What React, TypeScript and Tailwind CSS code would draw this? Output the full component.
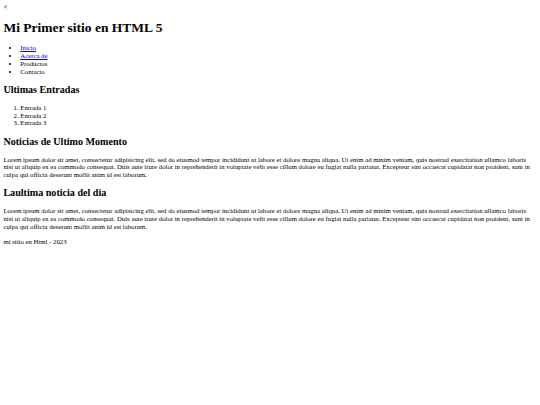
const LOREM =
  "Lorem ipsum dolor sit amet, consectetur adipisicing elit, sed do eiusmod tempor incididunt ut labore et dolore magna aliqua. Ut enim ad minim veniam, quis nostrud exercitation ullamco laboris nisi ut aliquip ex ea commodo consequat. Duis aute irure dolor in reprehenderit in voluptate velit esse cillum dolore eu fugiat nulla pariatur. Excepteur sint occaecat cupidatat non proident, sunt in culpa qui officia deserunt mollit anim id est laborum.";

export default function App() {
  return (
    <div className="min-h-[405px] bg-white px-[3.4px] py-[3px] font-['Liberation_Serif',serif] text-[6.75px] leading-[7.8px] text-black">
      <div>&lt;</div>
      <h1 className="my-[9px] text-[13.5px] font-bold leading-[15.5px]">Mi Primer sitio en HTML 5</h1>
      <ul className="my-[6.75px] list-disc pl-[16.9px]">
        <li>
          <a href="#" className="text-[#0000ee] underline">
            Inicio
          </a>
        </li>
        <li>
          <a href="#" className="text-[#0000ee] underline">
            Acerca de
          </a>
        </li>
        <li>Productos</li>
        <li>Contacto</li>
      </ul>
      <h2 className="my-[8.4px] text-[10.1px] font-bold leading-[11.6px]">Ultimas Entradas</h2>
      <ol className="my-[6.75px] list-decimal pl-[16.9px]">
        <li>Entrada 1</li>
        <li>Entrada 2</li>
        <li>Entrada 3</li>
      </ol>
      <h2 className="my-[8.4px] text-[10.1px] font-bold leading-[11.6px]">Noticias de Ultimo Momento</h2>
      <p className="my-[6.75px]">{LOREM}</p>
      <h2 className="my-[8.4px] text-[10.1px] font-bold leading-[11.6px]">Laultima noticia del dia</h2>
      <p className="my-[6.75px]">{LOREM}</p>
      <footer>
        <p className="my-[6.75px]">mi sitio en Html - 2023</p>
      </footer>
    </div>
  );
}
